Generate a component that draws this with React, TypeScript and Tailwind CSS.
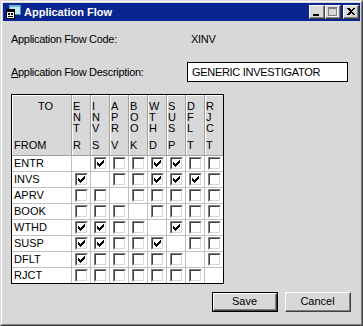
import React from 'react';

const cols = ['ENTR', 'INVS', 'APRV', 'BOOK', 'WTHD', 'SUSP', 'DFLT', 'RJCT'];

// rows are FROM, listed cols are the TO states that are ticked
const ticked: Record<string, string[]> = {
  ENTR: ['INVS', 'WTHD', 'SUSP'],
  INVS: ['ENTR', 'WTHD', 'SUSP', 'DFLT'],
  APRV: [],
  BOOK: [],
  WTHD: ['ENTR', 'INVS', 'SUSP'],
  SUSP: ['ENTR', 'INVS', 'WTHD'],
  DFLT: ['ENTR'],
  RJCT: [],
};

const font = { fontFamily: '"Liberation Sans", Arial, sans-serif' };

function CheckBox({ on }: { on: boolean }) {
  return (
    <div className="w-[13px] h-[13px] border border-t-[#808080] border-l-[#808080] border-r-white border-b-white">
      <div className="w-full h-full border border-t-[#404040] border-l-[#404040] border-r-[#d8d8d8] border-b-[#d8d8d8] bg-white p-[1px]">
        {on && (
          <svg width="7" height="7" viewBox="0 0 7 7" shapeRendering="crispEdges" className="block">
            <rect x="6" y="0" width="1" height="1" fill="#000" />
            <rect x="5" y="1" width="2" height="1" fill="#000" />
            <rect x="0" y="2" width="1" height="1" fill="#000" />
            <rect x="4" y="2" width="3" height="1" fill="#000" />
            <rect x="0" y="3" width="2" height="1" fill="#000" />
            <rect x="3" y="3" width="3" height="1" fill="#000" />
            <rect x="0" y="4" width="5" height="1" fill="#000" />
            <rect x="1" y="5" width="3" height="1" fill="#000" />
            <rect x="2" y="6" width="1" height="1" fill="#000" />
          </svg>
        )}
      </div>
    </div>
  );
}

function TitleButton({ children, className = '' }: { children: React.ReactNode; className?: string }) {
  return (
    <div className={`w-[16px] h-[14px] bg-[#d8d8d8] border border-t-white border-l-white border-r-[#404040] border-b-[#404040] ${className}`}>
      <div className="w-full h-full border-r border-b border-[#808080] flex items-center justify-center">
        {children}
      </div>
    </div>
  );
}

function AppIcon() {
  return (
    <svg width="16" height="16" viewBox="0 0 16 16" shapeRendering="crispEdges">
      <rect x="4" y="1" width="11" height="9" fill="#bfe6f5" stroke="#4a8fb5" strokeWidth="1" />
      <rect x="4" y="1" width="11" height="2" fill="#6ab0d8" />
      <rect x="1.5" y="5.5" width="8" height="9" fill="#fff" stroke="#000" strokeWidth="1" />
      <rect x="2" y="6" width="7" height="2" fill="#000" />
      <rect x="3" y="9" width="2" height="2" fill="#000" />
      <rect x="6" y="9" width="2" height="2" fill="#000" />
      <rect x="3" y="12" width="5" height="1" fill="#000" />
    </svg>
  );
}

function WinButton({ label, isDefault }: { label: string; isDefault?: boolean }) {
  if (isDefault) {
    return (
      <div className="w-[66px] h-[20px] border border-black">
        <div className="w-full h-full border border-t-white border-l-white border-r-[#404040] border-b-[#404040]">
          <div className="w-full h-full border-r border-b border-[#808080] flex items-center justify-center text-[11px] text-black">
            {label}
          </div>
        </div>
      </div>
    );
  }
  return (
    <div className="w-[66px] h-[20px] border border-t-white border-l-white border-r-[#404040] border-b-[#404040]">
      <div className="w-full h-full border-r border-b border-[#808080] flex items-center justify-center text-[11px] text-black">
        {label}
      </div>
    </div>
  );
}

export default function App() {
  return (
    <div style={font} className="w-[363px] h-[326px] bg-[#d8d8d8] border border-t-[#d8d8d8] border-l-[#d8d8d8] border-r-[#404040] border-b-[#404040]">
      <div className="w-full h-full border border-t-white border-l-white border-r-[#808080] border-b-[#808080] p-[1px] flex flex-col">
        {/* title bar */}
        <div className="h-[18px] bg-[#0a2490] flex items-center pl-[2px] pr-[1px] shrink-0">
          <AppIcon />
          <span className="ml-[3px] text-white font-bold text-[11px] leading-[13px]">Application Flow</span>
          <div className="ml-auto flex items-center">
            <TitleButton>
              <div className="w-[6px] h-[2px] bg-black mt-[6px] mr-[2px]" />
            </TitleButton>
            <TitleButton>
              <div className="w-[9px] h-[9px] border border-t-2 border-[#808080] shadow-[1px_1px_0_white]" />
            </TitleButton>
            <TitleButton className="ml-[2px]">
              <svg width="8" height="7" viewBox="0 0 8 7" shapeRendering="crispEdges">
                <path d="M0 0h2l2 2 2-2h2L5 3.5 8 7H6L4 5 2 7H0l3-3.5z" fill="#000" />
              </svg>
            </TitleButton>
          </div>
        </div>

        {/* body */}
        <div className="flex-1 flex flex-col pl-[8px] text-[11px] leading-[13px] text-black tracking-[-0.3px]">
          <div className="mt-[12px] flex h-[13px]">
            <div className="w-[180px]">Application Flow Code:</div>
            <div>XINV</div>
          </div>

          <div className="mt-[16px] flex items-center h-[20px]">
            <div className="w-[176px]">
              <span className="underline">A</span>pplication Flow Description:
            </div>
            <div className="w-[161px] h-[20px] border border-black bg-white flex items-center pl-[4px]">
              GENERIC INVESTIGATOR
            </div>
          </div>

          <div className="mt-[12px] w-[213px] border border-black grid grid-cols-[59px_repeat(8,19px)] grid-rows-[60px_repeat(8,16px)] tracking-normal">
            <div className="bg-[#d8d8d8] shadow-[inset_1px_1px_0_white] flex flex-col justify-between pt-[6px] pb-[4px]">
              <div className="pl-[26px] leading-[11px]">TO</div>
              <div className="pl-[2px] leading-[11px]">FROM</div>
            </div>
            {cols.map((c) => (
              <div
                key={c}
                className="bg-[#d8d8d8] border-l border-[#a0a0a0] shadow-[inset_1px_1px_0_white] flex flex-col justify-between pt-[6px] pb-[4px] pl-[1px] leading-[11px]"
              >
                <div>
                  <div>{c[0]}</div>
                  <div>{c[1]}</div>
                  <div>{c[2]}</div>
                </div>
                <div>{c[3]}</div>
              </div>
            ))}

            {cols.map((from) => (
              <React.Fragment key={from}>
                <div className={`bg-white border-t ${from === 'ENTR' ? 'border-[#a0a0a0]' : 'border-[#c0c0c0]'} pl-[2px] flex items-center`}>
                  {from}
                </div>
                {cols.map((to) => (
                  <div
                    key={to}
                    className={`bg-white border-t border-l ${from === 'ENTR' ? 'border-t-[#a0a0a0]' : 'border-t-[#c0c0c0]'} border-l-[#c0c0c0] pl-[3px] pt-[1px]`}
                  >
                    {from !== to && <CheckBox on={ticked[from].includes(to)} />}
                  </div>
                ))}
              </React.Fragment>
            ))}
          </div>

          <div className="mt-[8px] flex justify-end gap-[7px] pr-[9px] tracking-normal">
            <WinButton label="Save" isDefault />
            <WinButton label="Cancel" />
          </div>
        </div>
      </div>
    </div>
  );
}
